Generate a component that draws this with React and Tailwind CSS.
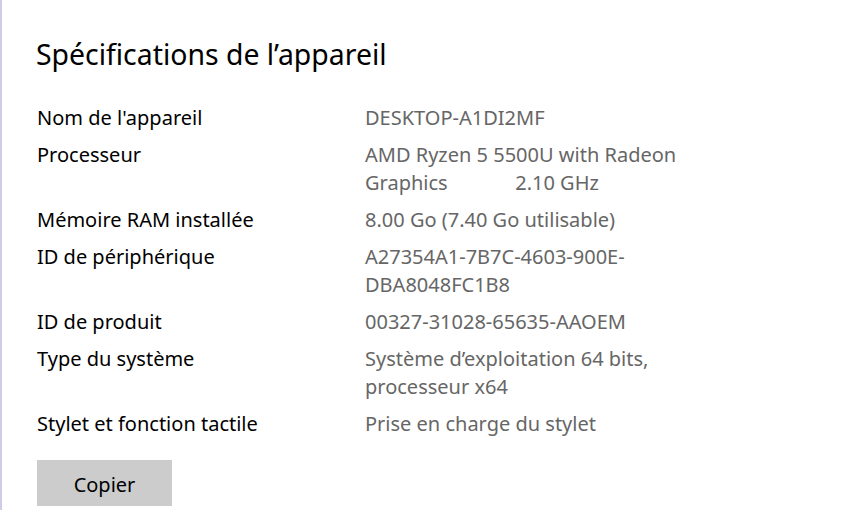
const specs = [
  { label: "Nom de l'appareil", value: ['DESKTOP-A1DI2MF'] },
  { label: 'Processeur', value: ['AMD Ryzen 5 5500U with Radeon', 'Graphics\u00a0\u00a0\u00a0\u00a0\u00a0\u00a0\u00a0\u00a0\u00a0\u00a0\u00a0\u00a0\u00a02.10 GHz'] },
  { label: 'Mémoire RAM installée', value: ['8.00 Go (7.40 Go utilisable)'] },
  { label: 'ID de périphérique', value: ['A27354A1-7B7C-4603-900E-', 'DBA8048FC1B8'] },
  { label: 'ID de produit', value: ['00327-31028-65635-AAOEM'] },
  { label: 'Type du système', value: ['Système d\u2019exploitation 64 bits,', 'processeur x64'] },
  { label: 'Stylet et fonction tactile', value: ['Prise en charge du stylet'] },
];

const App = () => {
  return (
    <div className="flex w-[841px] h-[516px] bg-white font-['Noto_Sans',sans-serif] overflow-hidden">
      {/* left accent line */}
      <div className="w-[2px] h-[510px] bg-[#d3cbe6] shrink-0" />

      <div className="flex-1 pl-[34px] pt-[32px]">
        <h1 className="text-[28.4px] leading-[44px] text-black">Spécifications de l&#8217;appareil</h1>

        <div className="mt-[28px] flex flex-col gap-[9px]">
          {specs.map((row) => (
            <div key={row.label} className="flex text-[20px] leading-[28px]">
              <div className="w-[329px] shrink-0 pl-[1px] text-black">{row.label}</div>
              <div className="text-[#666666]">
                {row.value.map((line) => (
                  <div key={line} className="whitespace-pre">{line}</div>
                ))}
              </div>
            </div>
          ))}
        </div>

        <button className="mt-[22px] ml-[1px] w-[135px] h-[46px] pt-[3px] bg-[#cccccc] text-[20px] text-black">
          Copier
        </button>
      </div>
    </div>
  );
};

export default App;
